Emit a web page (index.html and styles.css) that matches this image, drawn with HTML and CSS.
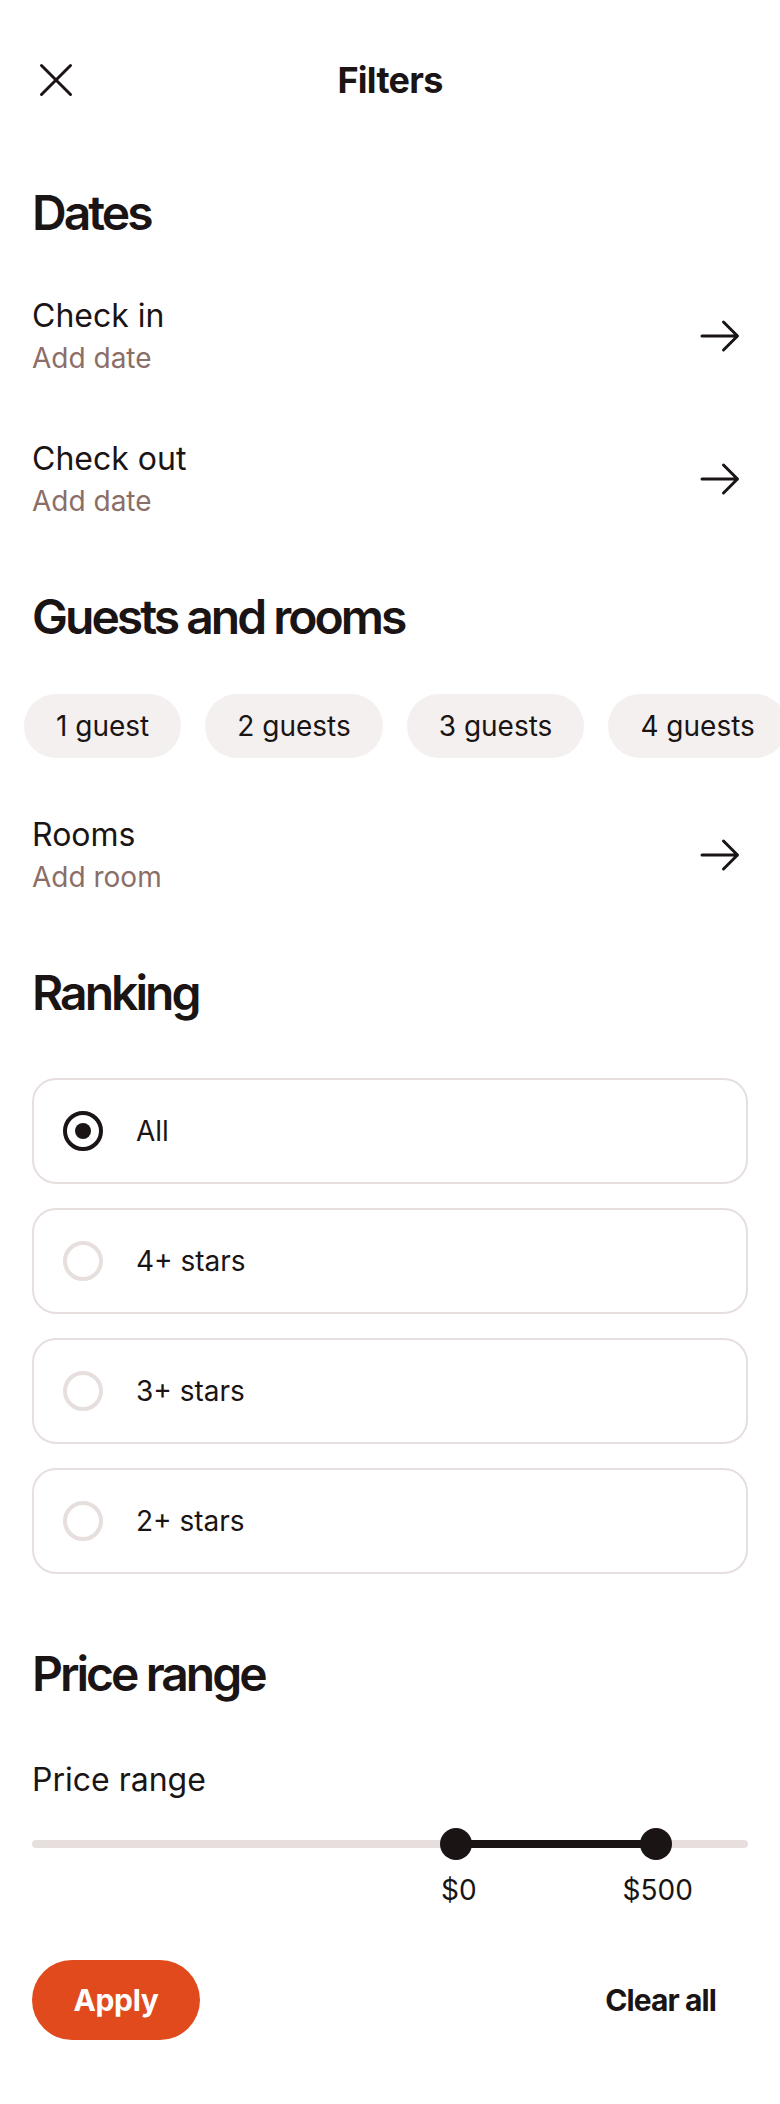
FILE: index.html
```html
<!DOCTYPE html>
<html lang="en">
<head>
<meta charset="utf-8">
<title>Filters</title>
<link rel="stylesheet" href="styles.css">
</head>
<body>
<div class="page">
  <header class="header">
    <button class="icon-btn" aria-label="Close">
      <svg width="48" height="48" viewBox="0 0 48 48"><path d="M9.5 9.5 L38.5 38.5 M38.5 9.5 L9.5 38.5" stroke="#1a1414" stroke-width="3" stroke-linecap="round" fill="none"/></svg>
    </button>
    <h1 class="title">Filters</h1>
    <span class="spacer"></span>
  </header>

  <h2 class="section-title dates-title">Dates</h2>
  <div class="row first-row">
    <div class="row-text">
      <div class="row-label">Check in</div>
      <div class="row-sub">Add date</div>
    </div>
    <svg class="arrow" width="40" height="40" viewBox="0 0 40 40"><path d="M2 20 H37 M23.5 6 L37.5 20 L23.5 34" stroke="#1a1414" stroke-width="3" stroke-linecap="round" stroke-linejoin="round" fill="none"/></svg>
  </div>
  <div class="row">
    <div class="row-text">
      <div class="row-label">Check out</div>
      <div class="row-sub">Add date</div>
    </div>
    <svg class="arrow" width="40" height="40" viewBox="0 0 40 40"><path d="M2 20 H37 M23.5 6 L37.5 20 L23.5 34" stroke="#1a1414" stroke-width="3" stroke-linecap="round" stroke-linejoin="round" fill="none"/></svg>
  </div>

  <h2 class="section-title guests-title">Guests and rooms</h2>
  <div class="chips">
    <span class="chip">1 guest</span>
    <span class="chip">2 guests</span>
    <span class="chip">3 guests</span>
    <span class="chip">4 guests</span>
  </div>
  <div class="row rooms-row">
    <div class="row-text">
      <div class="row-label">Rooms</div>
      <div class="row-sub">Add room</div>
    </div>
    <svg class="arrow" width="40" height="40" viewBox="0 0 40 40"><path d="M2 20 H37 M23.5 6 L37.5 20 L23.5 34" stroke="#1a1414" stroke-width="3" stroke-linecap="round" stroke-linejoin="round" fill="none"/></svg>
  </div>

  <h2 class="section-title ranking-title">Ranking</h2>
  <div class="options">
    <label class="option"><span class="radio selected"></span><span class="option-label">All</span></label>
    <label class="option"><span class="radio"></span><span class="option-label">4+ stars</span></label>
    <label class="option"><span class="radio"></span><span class="option-label">3+ stars</span></label>
    <label class="option"><span class="radio"></span><span class="option-label">2+ stars</span></label>
  </div>

  <h2 class="section-title price-title">Price range</h2>
  <div class="price-label">Price range</div>
  <div class="slider">
    <div class="track"></div>
    <div class="range" style="left:59.2%; width:27.95%"></div>
    <span class="thumb" style="left:59.2%"></span>
    <span class="thumb" style="left:87.15%"></span>
  </div>
  <div class="slider-values">
    <span class="value" style="left:59.6%">$0</span>
    <span class="value" style="left:87.4%">$500</span>
  </div>

  <footer class="footer">
    <button class="apply">Apply</button>
    <button class="clear">Clear all</button>
  </footer>
</div>
</body>
</html>
```

FILE: styles.css
```css
* { box-sizing: border-box; }

html, body {
  margin: 0;
  padding: 0;
  background: #ffffff;
}

body {
  font-family: Inter, "Noto Sans", sans-serif;
  color: #1a1414;
}

.page {
  width: 780px;
  padding: 0 32px 64px;
  overflow: hidden;
}

button {
  font-family: inherit;
  border: none;
  background: none;
  padding: 0;
  margin: 0;
  cursor: pointer;
  color: inherit;
}

.header {
  display: grid;
  grid-template-columns: 48px 1fr 48px;
  align-items: center;
  height: 48px;
  margin-top: 56px;
}

.icon-btn {
  width: 48px;
  height: 48px;
  display: block;
}

.icon-btn svg { display: block; }

.title {
  margin: 0;
  text-align: center;
  font-size: 36px;
  line-height: 48px;
  font-weight: 700;
  letter-spacing: -0.02em;
}

.section-title {
  margin: 0;
  font-size: 48px;
  line-height: 58px;
  font-weight: 600;
  letter-spacing: -0.062em;
}

.dates-title { margin-top: 80px; }
.guests-title { margin-top: 39px; }
.ranking-title { margin-top: 39px; }
.price-title { margin-top: 71px; }

.row {
  display: flex;
  align-items: center;
  justify-content: space-between;
  padding: 33px 0 30px;
}

.first-row { margin-top: 21px; }
.rooms-row { margin-top: 24px; }

.row-text {
  display: flex;
  flex-direction: column;
  gap: 4px;
}

.row-label {
  font-size: 32px;
  line-height: 40px;
}

.row-sub {
  font-size: 28px;
  line-height: 36px;
  color: #8b6e67;
}

.arrow {
  display: block;
  margin-right: 8px;
}

.chips {
  display: flex;
  gap: 24px;
  margin: 48px -32px 0 -8px;
  overflow: hidden;
}

.chip {
  flex-shrink: 0;
  height: 64px;
  padding: 0 32px;
  border-radius: 32px;
  background: #f4f0ef;
  font-size: 28px;
  line-height: 64px;
  white-space: nowrap;
}

.options {
  display: flex;
  flex-direction: column;
  gap: 24px;
  margin-top: 56px;
}

.option {
  display: flex;
  align-items: center;
  gap: 33px;
  height: 106px;
  padding-left: 29px;
  border: 2px solid #e6dfdd;
  border-radius: 24px;
}

.radio {
  width: 40px;
  height: 40px;
  border-radius: 50%;
  border: 4px solid #e6dfdd;
  display: flex;
  align-items: center;
  justify-content: center;
  flex-shrink: 0;
}

.radio.selected {
  border-color: #1a1414;
}

.radio.selected::after {
  content: "";
  width: 16px;
  height: 16px;
  border-radius: 50%;
  background: #1a1414;
}

.option-label {
  font-size: 28px;
  line-height: 36px;
}

.price-label {
  margin-top: 57px;
  font-size: 32px;
  line-height: 40px;
}

.slider {
  position: relative;
  height: 32px;
  padding-top: 12px;
  margin-top: 28px;
}

.track {
  height: 8px;
  border-radius: 4px;
  background: #e6dfdd;
}

.range {
  position: absolute;
  top: 12px;
  height: 8px;
  background: #1a1414;
}

.thumb {
  position: absolute;
  top: 0;
  width: 32px;
  height: 32px;
  margin-left: -16px;
  border-radius: 50%;
  background: #1a1414;
}

.slider-values {
  position: relative;
  height: 36px;
  margin-top: 12px;
}

.value {
  position: absolute;
  top: 0;
  transform: translateX(-50%);
  font-size: 28px;
  line-height: 36px;
  white-space: nowrap;
}

.footer {
  display: flex;
  align-items: center;
  justify-content: space-between;
  margin-top: 52px;
}

.apply {
  width: 168px;
  height: 80px;
  border-radius: 40px;
  background: #e04a1d;
  color: #ffffff;
  font-size: 30px;
  font-weight: 700;
  letter-spacing: -0.01em;
}

.clear {
  height: 80px;
  padding: 0 32px;
  font-size: 30px;
  font-weight: 700;
  letter-spacing: -0.03em;
}
```
